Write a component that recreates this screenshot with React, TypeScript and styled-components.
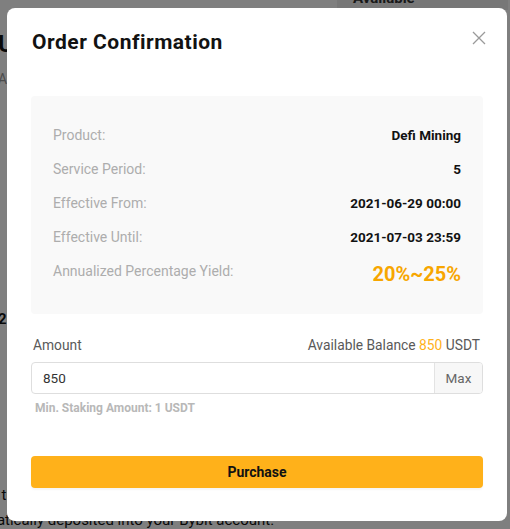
import styled, { createGlobalStyle } from "styled-components";

const Global = createGlobalStyle`
  html, body {
    margin: 0;
    padding: 0;
    background: #ffffff;
    font-family: Roboto, "Noto Sans", "Liberation Sans", sans-serif;
    overflow: hidden;
  }
`;

const Page = styled.div`
  position: relative;
  width: 510px;
  height: 529px;
  overflow: hidden;
  display: flex;
  flex-direction: column;
  margin-left: -2px;
`;

const TopStrip = styled.div`
  display: flex;
  justify-content: flex-end;
  height: 24px;
  margin-top: -14px;
`;

const SideTag = styled.div`
  width: 155px;
  padding-left: 16px;
  background: #efefef;
  font-size: 15px;
  font-weight: 700;
  color: #333;
  line-height: 24px;
`;

const PageTitle = styled.h1`
  margin: 19px 0 0;
  font-size: 24px;
  font-weight: 700;
  color: #121212;
  line-height: 30px;
`;

const PageSub = styled.div`
  margin-top: 12px;
  font-size: 14px;
  color: #999;
`;

const Divider = styled.div<{ $gap: number }>`
  margin-top: ${(p) => p.$gap}px;
  height: 1px;
  background: #e5e5e5;
`;

const PageNum = styled.div`
  margin-top: 30px;
  font-size: 15px;
  font-weight: 700;
  color: #121212;
`;

const PageText = styled.p`
  margin: 24px 0 0 -44px;
  font-size: 15px;
  line-height: 25px;
  color: #121212;
  white-space: nowrap;
`;

const Overlay = styled.div`
  position: fixed;
  inset: 0;
  background: rgba(0, 0, 0, 0.5);
  padding: 8px 0 0 7px;
`;

const Modal = styled.div`
  width: 500px;
  height: 513px;
  box-sizing: border-box;
  background: #fff;
  border-radius: 8px;
  padding: 20px 24px 0 24px;
  display: flex;
  flex-direction: column;
  position: relative;
`;

const Header = styled.div`
  display: flex;
  justify-content: space-between;
  align-items: flex-start;
  padding-left: 1px;
`;

const Title = styled.h2`
  margin: 0;
  font-size: 21px;
  font-weight: 700;
  color: #121212;
  line-height: 28px;
  letter-spacing: 0.5px;
`;

const Close = styled.button`
  border: 0;
  background: none;
  padding: 0;
  margin: 0 -6px 0 0;
  width: 20px;
  height: 20px;
  cursor: pointer;
  display: flex;
  align-items: center;
  justify-content: center;
`;

const InfoCard = styled.div`
  margin-top: 40px;
  background: #f9f9f9;
  border-radius: 4px;
  padding: 29px 22px 33px;
  display: flex;
  flex-direction: column;
  gap: 14px;
`;

const InfoRow = styled.div`
  display: flex;
  justify-content: space-between;
  align-items: flex-start;
  height: 20px;
`;

const Label = styled.span`
  font-size: 14px;
  color: #adadad;
  line-height: 20px;
`;

const Value = styled.span<{ $accent?: boolean }>`
  font-size: ${(p) => (p.$accent ? "20px" : "13.5px")};
  font-weight: 700;
  color: ${(p) => (p.$accent ? "#f7a600" : "#121212")};
  line-height: ${(p) => (p.$accent ? "26px" : "20px")};
`;

const AmountHead = styled.div`
  margin-top: 21px;
  display: flex;
  justify-content: space-between;
  padding: 0 3px 0 2px;
  font-size: 13.8px;
  color: #595959;
  line-height: 20px;
`;

const Orange = styled.span`
  color: #ffb11a;
`;

const InputBox = styled.div`
  margin-top: 7px;
  height: 32px;
  box-sizing: border-box;
  border: 1px solid #dedede;
  border-radius: 4px;
  display: flex;
  overflow: hidden;
`;

const AmountInput = styled.input`
  flex: 1;
  border: 0;
  outline: none;
  padding: 0 11px;
  font-family: inherit;
  font-size: 13.5px;
  color: #333;
  background: transparent;
`;

const MaxButton = styled.button`
  width: 48px;
  border: 0;
  border-left: 1px solid #e3e3e3;
  background: #f7f7f7;
  font-family: inherit;
  font-size: 13.5px;
  color: #666;
  padding: 0;
`;

const Hint = styled.div`
  margin-top: 6px;
  padding-left: 4px;
  font-size: 12px;
  font-weight: 700;
  color: #b8b8b8;
  line-height: 16px;
`;

const Purchase = styled.button`
  margin-top: 40px;
  height: 32px;
  border: 0;
  border-radius: 4px;
  background: #ffb11a;
  font-family: inherit;
  font-size: 14px;
  font-weight: 700;
  color: #121212;
  box-shadow: 0 2px 2px rgba(0, 0, 0, 0.04);
`;

const rows: { label: string; value: string; accent?: boolean }[] = [
  { label: "Product:", value: "Defi Mining" },
  { label: "Service Period:", value: "5" },
  { label: "Effective From:", value: "2021-06-29 00:00" },
  { label: "Effective Until:", value: "2021-07-03 23:59" },
  { label: "Annualized Percentage Yield:", value: "20%~25%", accent: true },
];

export default function App() {
  return (
    <>
      <Global />
      <Page>
        <TopStrip>
          <SideTag>Available</SideTag>
        </TopStrip>
        <PageTitle>USDT Mining</PageTitle>
        <PageSub>APY</PageSub>
        <Divider $gap={110} />
        <Divider $gap={83} />
        <PageNum>2</PageNum>
        <Divider $gap={131} />
        <PageText>
          Follow the yields, they will be distributed daily and the principal will be
          <br />
          automatically deposited into your Bybit account.
        </PageText>
      </Page>
      <Overlay>
        <Modal>
          <Header>
            <Title>Order Confirmation</Title>
            <Close aria-label="close">
              <svg width="14" height="14" viewBox="0 0 14 14">
                <path
                  d="M1 1 L13 13 M13 1 L1 13"
                  stroke="#9a9a9a"
                  strokeWidth="1.3"
                  fill="none"
                />
              </svg>
            </Close>
          </Header>
          <InfoCard>
            {rows.map((r) => (
              <InfoRow key={r.label}>
                <Label>{r.label}</Label>
                <Value $accent={r.accent}>{r.value}</Value>
              </InfoRow>
            ))}
          </InfoCard>
          <AmountHead>
            <span>Amount</span>
            <span>
              Available Balance <Orange>850</Orange> USDT
            </span>
          </AmountHead>
          <InputBox>
            <AmountInput defaultValue="850" />
            <MaxButton>Max</MaxButton>
          </InputBox>
          <Hint>Min. Staking Amount: 1 USDT</Hint>
          <Purchase>Purchase</Purchase>
        </Modal>
      </Overlay>
    </>
  );
}
